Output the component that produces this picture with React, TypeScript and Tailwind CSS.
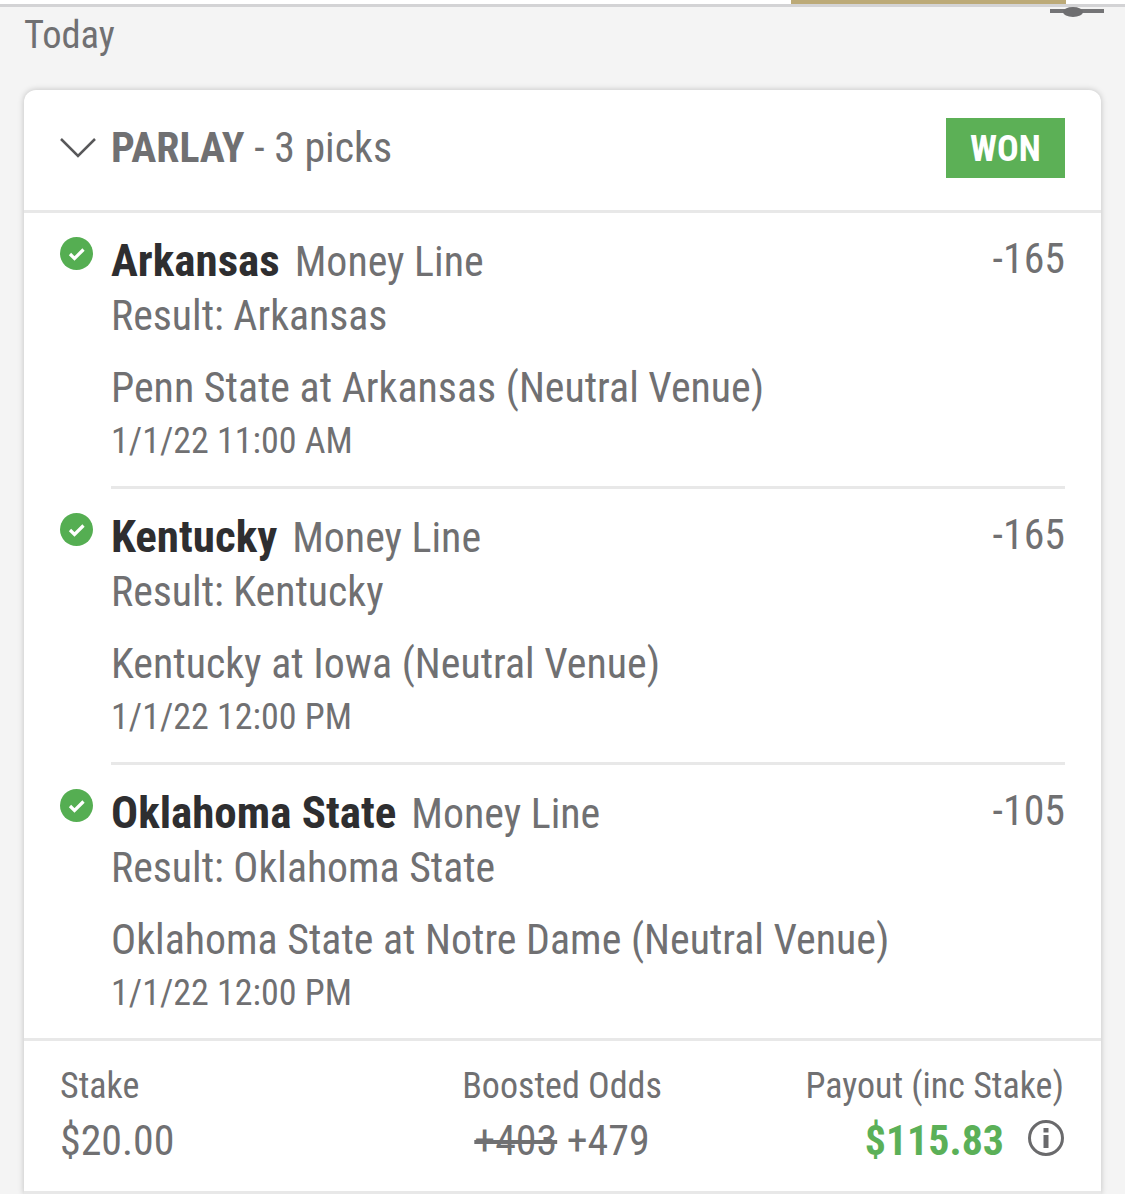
import React from "react";

const font = { fontFamily: "Roboto, sans-serif" };

function Check() {
  return (
    <svg width="33" height="33" viewBox="0 0 33 33" className="shrink-0">
      <circle cx="16.5" cy="16.5" r="16.5" fill="#55ae52" />
      <path d="M10 17l4.500 4.500L23.500 12.500" fill="none" stroke="#fff" strokeWidth="3.200" />
    </svg>
  );
}

function Pick({ team, odds, result, game, time, last }: { team: string; odds: string; result: string; game: string; time: string; last?: boolean }) {
  return (
    <div className={last ? "flex h-[273px]" : "flex h-[276px]"}>
      <div className="w-[87px] pl-[36px] pt-[24px] shrink-0"><Check /></div>
      <div className={last ? "flex-1 mr-[36px] pt-[21px]" : "flex-1 mr-[36px] pt-[21px] border-b-[3px] border-[#e8e8e8]"}>
        <div className="flex justify-between h-[55px]">
          <div className="whitespace-nowrap text-[41.9px] leading-[53px] [font-stretch:75%] text-[#707072]">
            <span className="font-bold text-[45px] text-[#2e2e30] mr-[15px]">{team}</span>Money Line
          </div>
          <div className="text-[41.9px] leading-[50px] [font-stretch:75%] text-[#707072]">{odds}</div>
        </div>
        <div className="text-[41.8px] leading-[54px] [font-stretch:75%] text-[#707072]">{result}</div>
        <div className="mt-[18px] text-[41.9px] leading-[54px] [font-stretch:75%] text-[#707072]">{game}</div>
        <div className="text-[36px] leading-[52px] [font-stretch:75%] text-[#707072]">{time}</div>
      </div>
    </div>
  );
}

export default function App() {
  return (
    <div style={font} className="w-[1125px] h-[1194px] bg-[#f4f4f4] overflow-hidden">
      <div className="relative h-[7px] bg-white border-b-[3px] border-[#d3d3d5]">
        <div className="absolute left-[791px] top-0 w-[275px] h-[4px] bg-[#bcaa78]" />
      </div>
      <div className="relative">
        <svg className="absolute right-[21px] top-0" width="54" height="12" viewBox="0 0 54 12">
          <rect x="0" y="2" width="54" height="4" fill="#747476" />
          <ellipse cx="23" cy="5" rx="10" ry="5" fill="#6e6e70" />
        </svg>
      </div>
      <div className="pl-[24px] h-[83px] text-[38.5px] leading-[56px] [font-stretch:75%] text-[#707072]">Today</div>
      <div className="ml-[24px] w-[1077px] rounded-t-[12px] bg-white shadow-[0_0_6px_rgba(0,0,0,0.22)]">
        <div className="flex items-center justify-between h-[123px] pl-[36px] pr-[36px] pb-[4px] border-b-[3px] border-[#e8e8e8]">
          <div className="flex items-center">
            <svg width="36" height="20" viewBox="0 0 36 20" className="mr-[15px]">
              <path d="M1 1l17 17L35 1" fill="none" stroke="#58585a" strokeWidth="2.500" />
            </svg>
            <div className="text-[41.9px] [font-stretch:75%] text-[#707072]"><span className="font-bold">PARLAY</span> - 3 picks</div>
          </div>
          <div className="w-[119px] h-[60px] pt-[1px] bg-[#5cb056] flex items-center justify-center text-white font-bold text-[36px] [font-stretch:75%]">WON</div>
        </div>
        <Pick team="Arkansas" odds="-165" result="Result: Arkansas" game="Penn State at Arkansas (Neutral Venue)" time="1/1/22 11:00 AM" />
        <Pick team="Kentucky" odds="-165" result="Result: Kentucky" game="Kentucky at Iowa (Neutral Venue)" time="1/1/22 12:00 PM" />
        <Pick team="Oklahoma State" odds="-105" result="Result: Oklahoma State" game="Oklahoma State at Notre Dame (Neutral Venue)" time="1/1/22 12:00 PM" last />
        <div className="border-t-[3px] border-[#e8e8e8] h-[156px] pl-[36px] pr-[37px] pt-[24px] grid grid-cols-3 text-[#707072] border-b-[3px]">
          <div>
            <div className="text-[36px] leading-[42px] [font-stretch:75%]">Stake</div>
            <div className="mt-[5px] text-[41.9px] leading-[58px] [font-stretch:75%]">$20.00</div>
          </div>
          <div className="text-center whitespace-nowrap">
            <div className="text-[36px] leading-[42px] [font-stretch:75%]">Boosted Odds</div>
            <div className="mt-[5px] text-[41.9px] leading-[58px] [font-stretch:75%]"><span className="line-through">+403</span> +479</div>
          </div>
          <div className="text-right whitespace-nowrap">
            <div className="text-[36px] leading-[42px] [font-stretch:75%]">Payout (inc Stake)</div>
            <div className="mt-[5px] flex items-center justify-end h-[58px]">
              <span className="text-[41.9px] font-bold [font-stretch:75%] text-[#5bb058]">$115.83</span>
              <svg width="36" height="38" viewBox="0 0 36 38" className="ml-[24px] -mt-[6px]">
                <circle cx="18" cy="19" r="16.500" fill="none" stroke="#6a6a6c" strokeWidth="3" />
                <rect x="15.500" y="16" width="5" height="13" fill="#6a6a6c" />
                <rect x="15.500" y="9" width="5" height="4.500" fill="#6a6a6c" />
              </svg>
            </div>
          </div>
        </div>
      </div>
    </div>
  );
}
